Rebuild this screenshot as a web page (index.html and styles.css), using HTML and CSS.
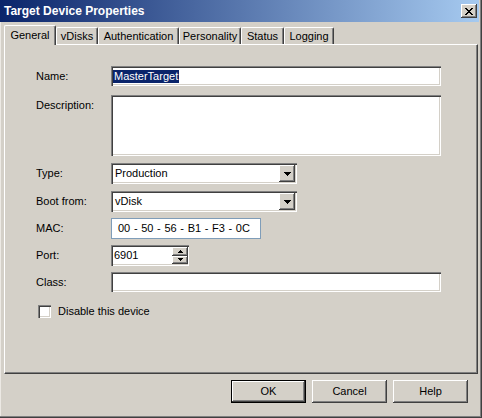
FILE: index.html
```html
<!DOCTYPE html>
<html lang="en">
<head>
<meta charset="utf-8">
<title>Target Device Properties</title>
<link rel="stylesheet" href="styles.css">
</head>
<body>
<div class="window">
  <div class="titlebar">
    <span class="title">Target Device Properties</span>
    <div class="close" role="button" aria-label="Close">
      <svg width="8" height="7" viewBox="0 0 8 7" shape-rendering="crispEdges"><path d="M0 0h2v1H0z M6 0h2v1H6z M1 1h2v1H1z M5 1h2v1H5z M2 2h4v1H2z M3 3h2v1H3z M2 4h4v1H2z M1 5h2v1H1z M5 5h2v1H5z M0 6h2v1H0z M6 6h2v1H6z" fill="#000"/></svg>
    </div>
  </div>
  <div class="content">
    <div class="tabs">
      <div class="tab active t-general">General</div>
      <div class="tab t-vdisks">vDisks</div>
      <div class="tab t-auth">Authentication</div>
      <div class="tab t-pers">Personality</div>
      <div class="tab t-status">Status</div>
      <div class="tab t-log">Logging</div>
    </div>
    <div class="panel">
      <div class="row r-name">
        <span class="lbl">Name:</span>
        <div class="sunken wide h20"><span class="selected">MasterTarget</span></div>
      </div>
      <div class="row r-desc">
        <span class="lbl lbl-top">Description:</span>
        <div class="sunken wide h61"></div>
      </div>
      <div class="row r-type">
        <span class="lbl">Type:</span>
        <div class="sunken combo">
          <span class="combo-text">Production</span>
          <span class="drop raised"><svg width="7" height="4" viewBox="0 0 7 4" shape-rendering="crispEdges"><path d="M0 0h7v1H0z M1 1h5v1H1z M2 2h3v1H2z M3 3h1v1H3z" fill="#000"/></svg></span>
        </div>
      </div>
      <div class="row r-boot">
        <span class="lbl">Boot from:</span>
        <div class="sunken combo">
          <span class="combo-text">vDisk</span>
          <span class="drop raised"><svg width="7" height="4" viewBox="0 0 7 4" shape-rendering="crispEdges"><path d="M0 0h7v1H0z M1 1h5v1H1z M2 2h3v1H2z M3 3h1v1H3z" fill="#000"/></svg></span>
        </div>
      </div>
      <div class="row r-mac">
        <span class="lbl">MAC:</span>
        <div class="mac">00 - 50 - 56 - B1 - F3 - 0C</div>
      </div>
      <div class="row r-port">
        <span class="lbl">Port:</span>
        <div class="sunken port">
          <span class="port-text">6901</span>
          <div class="spin">
            <span class="spin-btn raised"><svg width="5" height="3" viewBox="0 0 5 3" shape-rendering="crispEdges"><path d="M2 0h1v1H2z M1 1h3v1H1z M0 2h5v1H0z" fill="#000"/></svg></span>
            <span class="spin-btn raised"><svg width="5" height="3" viewBox="0 0 5 3" shape-rendering="crispEdges"><path d="M0 0h5v1H0z M1 1h3v1H1z M2 2h1v1H2z" fill="#000"/></svg></span>
          </div>
        </div>
      </div>
      <div class="row r-class">
        <span class="lbl">Class:</span>
        <div class="sunken wide h20"></div>
      </div>
      <div class="row r-check">
        <span class="checkbox sunken"></span>
        <span class="check-label">Disable this device</span>
      </div>
    </div>
    <div class="actions">
      <div class="btn default"><span class="btn-inner raised">OK</span></div>
      <div class="btn"><span class="btn-inner raised">Cancel</span></div>
      <div class="btn"><span class="btn-inner raised">Help</span></div>
    </div>
  </div>
</div>
</body>
</html>
```

FILE: styles.css
```css
* { box-sizing: border-box; }
html, body { margin: 0; padding: 0; }
body {
  font-family: "Liberation Sans", Arial, sans-serif;
  font-size: 11px;
  color: #000;
  background: #d4d0c8;
}

.window {
  width: 482px;
  height: 418px;
  background: #d4d0c8;
  box-shadow: inset -1px -1px 0 #404040, inset -2px -2px 0 #808080, inset 1px 0 0 #ece9e4;
  padding-right: 3px;
  display: flex;
  flex-direction: column;
}

.titlebar {
  height: 22px;
  background: linear-gradient(to right, #0a246a, #a6caf0);
  display: flex;
  align-items: center;
  justify-content: space-between;
  padding: 0 2px 0 4px;
}
.title {
  color: #fff;
  font-weight: bold;
  font-size: 12px;
  line-height: 14px;
}
.close {
  width: 16px;
  height: 14px;
  background: #d4d0c8;
  box-shadow: inset -1px -1px 0 #404040, inset 1px 1px 0 #fff, inset -2px -2px 0 #808080;
  display: flex;
  align-items: center;
  justify-content: center;
  padding-right: 1px;
}
.close svg { display: block; }

.content {
  flex: 1;
  padding-left: 4px;
  display: flex;
  flex-direction: column;
}

.tabs {
  height: 22px;
  display: flex;
  align-items: flex-end;
}
.tab {
  height: 17px;
  border-top: 1px solid #fff;
  border-left: 1px solid #fff;
  border-right: 1px solid #404040;
  border-radius: 2px 2px 0 0;
  box-shadow: inset -1px 0 0 #808080;
  display: flex;
  align-items: center;
  justify-content: center;
  padding-top: 1px;
  line-height: 13px;
  white-space: nowrap;
}
.tab.active {
  height: 20px;
  margin-bottom: -1px;
  position: relative;
  z-index: 1;
  background: #d4d0c8;
  padding-top: 0;
  padding-bottom: 1px;
}
.t-general { width: 52px; }
.t-vdisks { width: 42px; }
.t-auth { width: 81px; }
.t-pers { width: 62px; }
.t-status { width: 43px; }
.t-log { width: 50px; }

.panel {
  width: 474px;
  height: 330px;
  border: 1px solid;
  border-color: #fff #404040 #404040 #fff;
  box-shadow: inset -1px -1px 0 #808080;
  padding: 21px 0 0 31px;
}

.row { display: flex; align-items: center; }
.lbl { width: 75px; flex: none; line-height: 13px; }
.lbl-top { align-self: flex-start; padding-top: 4px; }

.r-desc { margin-top: 9px; }
.r-type { margin-top: 7px; }
.r-boot { margin-top: 7px; }
.r-mac { margin-top: 6px; }
.r-port { margin-top: 6px; }
.r-class { margin-top: 6px; }
.r-check { margin-top: 13px; padding-left: 2px; }

.sunken {
  background: #fff;
  box-shadow: inset 1px 1px 0 #808080, inset 2px 2px 0 #404040, inset -1px -1px 0 #fff, inset -2px -2px 0 #d4d0c8;
}
.raised {
  background: #d4d0c8;
  box-shadow: inset -1px -1px 0 #404040, inset 1px 1px 0 #fff, inset -2px -2px 0 #808080;
}

.wide { width: 330px; }
.h20 { height: 20px; display: flex; align-items: center; padding: 2px; }
.h61 { height: 61px; }

.selected {
  background: #0a246a;
  color: #fff;
  line-height: 13px;
  padding: 0 1px;
}

.combo {
  width: 186px;
  height: 21px;
  padding: 2px;
  display: flex;
  align-items: center;
}
.combo-text { flex: 1; padding-left: 2px; line-height: 13px; }
.drop {
  width: 16px;
  height: 17px;
  display: flex;
  align-items: center;
  justify-content: center;
  padding-top: 1px;
}
.drop svg, .spin-btn svg { display: block; }

.mac {
  width: 150px;
  height: 21px;
  border: 1px solid #7f9db9;
  background: #fff;
  padding-left: 6px;
  line-height: 19px;
  word-spacing: 0.6px;
  white-space: nowrap;
}

.port {
  width: 78px;
  height: 21px;
  padding: 2px;
  display: flex;
  align-items: center;
}
.port-text { flex: 1; padding-left: 1px; line-height: 13px; }
.spin {
  width: 16px;
  height: 17px;
  display: flex;
  flex-direction: column;
  margin-right: -1px;
}
.spin-btn {
  flex: 1;
  display: flex;
  align-items: center;
  justify-content: center;
}

.checkbox {
  width: 13px;
  height: 13px;
  flex: none;
}
.check-label { margin-left: 7px; line-height: 13px; }

.actions {
  display: flex;
  justify-content: flex-end;
  gap: 6px;
  margin-top: 6px;
  padding-right: 11px;
}
.btn {
  width: 75px;
  height: 23px;
  display: flex;
}
.btn.default { border: 1px solid #000; }
.btn-inner {
  flex: 1;
  display: flex;
  align-items: center;
  justify-content: center;
  line-height: 13px;
}
```
